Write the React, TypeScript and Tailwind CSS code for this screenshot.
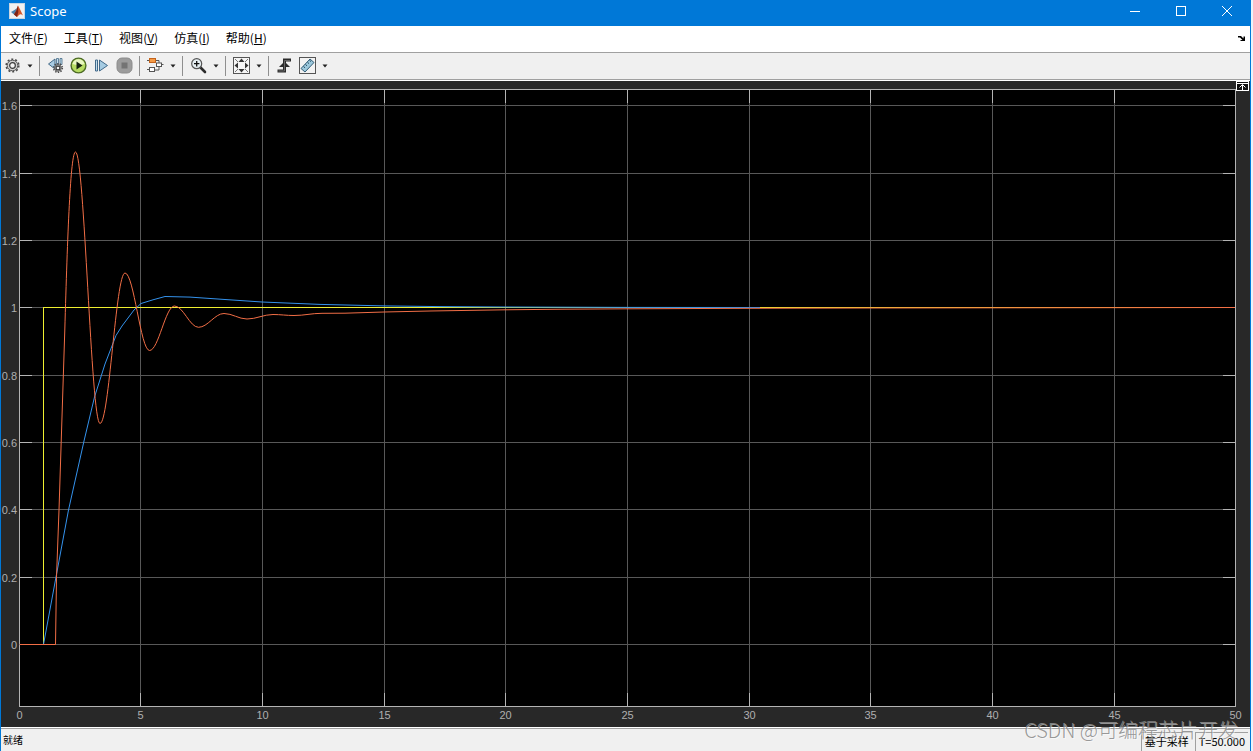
import { ReactNode } from "react";

const menus = [
  { label: "文件", key: "F" },
  { label: "工具", key: "T" },
  { label: "视图", key: "V" },
  { label: "仿真", key: "I" },
  { label: "帮助", key: "H" },
];

const xTicks = [0, 5, 10, 15, 20, 25, 30, 35, 40, 45, 50];
const yTicks = [0, 0.2, 0.4, 0.6, 0.8, 1, 1.2, 1.4, 1.6];

const LEFT = 19;
const RIGHT = 1235;
const TOP = 89;
const BOTTOM = 706;

// snapped to pixel centres so the grid stays sharp
const toX = (t: number) => Math.floor(19.2 + t * 24.33) + 0.5;
const toY = (v: number) => Math.floor(644.7 - v * 336.8) + 0.5;

// turning points of the oscillating response
const swings = [
  [75.5, 152],
  [100, 423.5],
  [125, 273],
  [149.5, 350.5],
  [174.5, 306],
  [198.5, 327.3],
  [224, 313.5],
  [247, 319],
  [273, 314.5],
  [294, 315.5],
  [322, 313.3],
];

function swingPath() {
  let d = "M19.5 644.5H55.5L56.5 577L59 510L61.2 442L64.8 330C67.5 235 70.5 152 75.5 152";
  for (let i = 1; i < swings.length; i++) {
    const [x0, y0] = swings[i - 1];
    const [x1, y1] = swings[i];
    const k = (x1 - x0) * 0.364;
    d += `C${x0 + k} ${y0} ${x1 - k} ${y1} ${x1} ${y1}`;
  }
  return d + "L345 313.2L384 312L430 311L505 309.8L565 309.2L627 308.8L750 308.3L870 308L1235 307.5";
}

function Chart() {
  return (
    <svg
      viewBox="1 81 1249 646"
      className="block w-full"
      fontFamily="'Liberation Sans', Arial, sans-serif"
      fontSize="11"
      role="img"
      aria-label="Scope"
    >
      <rect x={LEFT} y={TOP} width={RIGHT - LEFT} height={BOTTOM - TOP} fill="#000" />
      <g stroke="#585858" shapeRendering="crispEdges">
        {xTicks.slice(1, -1).map((t) => (
          <line key={t} x1={toX(t)} x2={toX(t)} y1={TOP} y2={BOTTOM} />
        ))}
        {yTicks.map((v) => (
          <line key={v} x1={LEFT} x2={RIGHT} y1={toY(v)} y2={toY(v)} />
        ))}
      </g>
      <g stroke="#b4b4b4" shapeRendering="crispEdges">
        {xTicks.slice(1, -1).map((t) => (
          <path key={t} d={`M${toX(t)} ${TOP}v14M${toX(t)} ${BOTTOM}v-13`} />
        ))}
        {yTicks.map((v) => (
          <path key={v} d={`M${LEFT} ${toY(v)}h13M${RIGHT} ${toY(v)}h-12`} />
        ))}
        <rect x="19.5" y="89.5" width="1216" height="617" fill="none" />
      </g>
      <g fill="none" strokeWidth="1" strokeLinejoin="round">
        <path d="M19.5 644.5H43.5V307.5H1235" stroke="#eeee30" shapeRendering="crispEdges" />
        <path
          d="M19.5 644.5H43.5L56 577L68.5 510L84 441L94.5 397L105 364L116 335.5L122 326L134 310L141 303.5L153 299.8L165 296.5L190 297.1L225 299.5L262 302L320 304.4L384 305.9L440 306.6L505 307L630 307.4L760 307.5"
          stroke="#3492ec"
        />
        <path d={swingPath()} stroke="#f26e46" />
      </g>
      <g fill="#afafaf">
        {yTicks.map((v) => (
          <text key={v} x="17" y={toY(v) + 4} textAnchor="end">
            {v}
          </text>
        ))}
        {xTicks.map((t) => (
          <text key={t} x={toX(t)} y="719" textAnchor="middle">
            {t}
          </text>
        ))}
      </g>
    </svg>
  );
}

function Tool({ label, children }: { label: string; children: ReactNode }) {
  return (
    <button aria-label={label} className="flex h-6 w-[23px] items-center justify-center">
      <svg width="17" height="17" viewBox="0 0 17 17" fill="none">
        {children}
      </svg>
    </button>
  );
}

function Caret({ label }: { label: string }) {
  return (
    <button aria-label={label} className="flex h-6 w-3 items-center justify-center">
      <svg width="6" height="4" viewBox="0 0 6 4">
        <path d="M.5 .5h5L3 3.5z" fill="#222" />
      </svg>
    </button>
  );
}

function Separator() {
  return <div className="ml-[3px] mr-1 h-5 w-px bg-[#8f8f8f]" />;
}

function Gear({ cx, cy, r }: { cx: number; cy: number; r: number }) {
  return (
    <>
      <circle cx={cx} cy={cy} r={r} stroke="#4a4a4a" strokeWidth="1.6" strokeDasharray={`${(r * Math.PI) / 10} ${(r * Math.PI) / 10}`} />
      <circle cx={cx} cy={cy} r={r - 1} fill="#d2d2d2" stroke="#555" strokeWidth="1" />
      <circle cx={cx} cy={cy} r={r * 0.45} fill="#f4f4f4" stroke="#3c3c3c" strokeWidth="1.2" />
    </>
  );
}

function Toolbar() {
  return (
    <div className="flex h-[27px] items-center border-b border-[#a0a0a0] bg-[#f0f0f0] pb-px">
      <Tool label="配置属性">
        <Gear cx={8.5} cy={8.5} r={6.3} />
      </Tool>
      <Caret label="配置选项" />
      <Separator />
      <Tool label="步退选项">
        <path d="M8 2L1.5 7L8 12z" fill="#a9cbe2" stroke="#446a87" />
        <path d="M9.5 1.5h2v6h-2zM13 1.5h2v6h-2z" fill="#c2dcec" stroke="#446a87" strokeWidth=".8" />
        <Gear cx={11} cy={11} r={4.3} />
      </Tool>
      <Tool label="运行">
        <circle cx="8.5" cy="8.5" r="7.4" fill="#b6dc63" stroke="#4d6b26" strokeWidth="1.4" />
        <path d="M2.5 7a6.2 6.2 0 0 1 12 0q-6 2-12 0z" fill="#e9f7c2" />
        <path d="M6.5 4.5l6 4l-6 4z" fill="#182510" />
      </Tool>
      <Tool label="步进">
        <path d="M2.5 3h2v11h-2z" fill="#c3deed" stroke="#41698a" />
        <path d="M6.5 3v11l8-5.5z" fill="#a5cbe2" stroke="#41698a" />
      </Tool>
      <Tool label="停止">
        <rect x="1" y="1" width="15" height="15" rx="5" fill="#9c9c9c" stroke="#8c8c8c" />
        <rect x="5.5" y="5.5" width="6" height="6" fill="#747474" />
      </Tool>
      <Separator />
      <Tool label="突出显示模块">
        <path d="M8 3.5h4v3M12 9v4H7M0 3.5h2M0 12.5h2" stroke="#555" />
        <rect x="2.5" y="1.5" width="6" height="4" fill="#f59a45" stroke="#c4631b" />
        <rect x="9.5" y="6" width="5" height="3.5" fill="#fff" stroke="#555" />
        <rect x="2.5" y="10.5" width="5" height="4" fill="#fff" stroke="#555" />
        <path d="M14.5 7.5h2" stroke="#555" />
      </Tool>
      <Caret label="模块选项" />
      <Separator />
      <Tool label="放大">
        <path d="M10.5 10.5l4.5 4.5" stroke="#2c2c2c" strokeWidth="2.6" strokeLinecap="round" />
        <circle cx="6.7" cy="6.7" r="5" fill="#e6eff3" stroke="#555" strokeWidth="1.2" />
        <path d="M4 6.7h5.4M6.7 4v5.4" stroke="#111" strokeWidth="1.3" />
      </Tool>
      <Caret label="缩放选项" />
      <Separator />
      <Tool label="缩放以适应">
        <rect x=".5" y=".5" width="16" height="16" fill="#f5f5f5" stroke="#555" />
        <path d="M8.5 1.5l3 3.5h-6zM8.5 15.5l3-3.5h-6zM1.5 8.5l3.5-3v6zM15.5 8.5l-3.500-3v6z" fill="#333" />
        <path d="M2 2l3 3M15 2l-3 3M2 15l3-3M15 15l-3-3" stroke="#777" />
      </Tool>
      <Caret label="适应选项" />
      <Separator />
      <Tool label="触发器">
        <path d="M1.500 14h7V3H15" stroke="#2b2b2b" strokeWidth="3" />
        <path d="M3 10L8.5 4.500l5.500 5.500z" fill="#2b2b2b" />
        <path d="M2.500 14h6V3.500H14" stroke="#777" strokeWidth=".8" />
      </Tool>
      <Tool label="光标测量">
        <rect x=".5" y=".5" width="16" height="16" fill="#f3f3f3" stroke="#555" />
        <path d="M2 11.500L11 2L15 5.500L6 15z" fill="#9cc8dc" stroke="#345f78" />
        <path d="M4.500 9.500l1.500 1.300M6.500 7.500l1.500 1.300M8.500 5.300l1.500 1.300M10.500 3.300l1.500 1.300" stroke="#234b62" />
      </Tool>
      <Caret label="测量选项" />
    </div>
  );
}

function TitleBar() {
  return (
    <header className="flex h-[26px] items-center justify-between bg-[#0078d7] text-white">
      <div className="flex items-center gap-[5px] pb-1 pl-2">
        <svg width="16" height="16" viewBox="0 0 16 16">
          <rect x=".5" y=".5" width="15" height="15" fill="#f1f1f1" stroke="#c9d6e2" />
          <path d="M2 9l3.500-2L8 5l-1.500 6L5 11.500z" fill="#4b82ae" />
          <path d="M5 11.500Q7.500 8 9 2.500Q11 6 14 12.500Q11.500 10.500 10 12L8 14z" fill="#d5582b" />
          <path d="M5 11.500Q7.500 8 9 2.500L9.300 9L8 14z" fill="#7d2317" />
        </svg>
        <h1 className="font-['Noto_Sans'] text-[13px] leading-4">Scope</h1>
      </div>
      <div className="flex pb-[5px]">
        <button aria-label="最小化" className="flex h-5 w-[46px] items-center justify-center">
          <svg width="10" height="10" viewBox="0 0 10 10" stroke="#fff">
            <path d="M0 5.500h10" />
          </svg>
        </button>
        <button aria-label="最大化" className="flex h-5 w-[46px] items-center justify-center">
          <svg width="10" height="10" viewBox="0 0 10 10" stroke="#fff" fill="none">
            <rect x=".5" y=".5" width="9" height="9" />
          </svg>
        </button>
        <button aria-label="关闭" className="flex h-5 w-[46px] items-center justify-center">
          <svg width="10" height="10" viewBox="0 0 10 10" stroke="#fff">
            <path d="M0 0l10 10M10 0L0 10" />
          </svg>
        </button>
      </div>
    </header>
  );
}

function MenuBar() {
  return (
    <nav className="flex h-[27px] items-center justify-between border-b border-[#a0a0a0] bg-white pb-0.5 pl-2 pr-1 text-[12px] leading-4 text-black">
      <div className="flex gap-4">
        {menus.map((m) => (
          <button key={m.key}>
            {m.label}(<span className="underline">{m.key}</span>)
          </button>
        ))}
      </div>
      <button aria-label="停靠">
        <svg width="8" height="7" viewBox="0 0 8 7">
          <path d="M0 1h3l2.500 2.500V1.500H7V6H2.500V5h2L2 2.500H0z" fill="#000" />
        </svg>
      </button>
    </nav>
  );
}

export default function App() {
  return (
    <div className="flex min-h-screen bg-[#e9f4fb] pr-[2px] font-['Noto_Sans_CJK_SC',sans-serif]">
      <div className="flex flex-1 flex-col border-x border-[#0078d7] bg-[#f0f0f0]">
        <TitleBar />
        <MenuBar />
        <Toolbar />
        <main className="relative border-y border-white bg-[#282828]">
          <Chart />
          <button aria-label="最大化坐标区" className="absolute right-px top-0">
            <svg width="13" height="10" viewBox="0 0 13 10" fill="none" stroke="#fff">
              <rect x=".5" y=".5" width="12" height="9" fill="#111" />
              <path d="M1 2.500h11M6.500 9V4M3.500 6.500l3-3l3 3" />
            </svg>
          </button>
        </main>
        <footer className="relative flex flex-1 items-end justify-between border-t border-[#a0a0a0] text-[11px] leading-4 text-black">
          <span className="pb-[3px] pl-[2px] text-[10px]">就绪</span>
          <div className="flex gap-[3px] pr-[2px]">
            <span className="border-l border-t border-[#a0a0a0] px-[3px] pb-[2px]">基于采样</span>
            <span className="border-l border-t border-[#a0a0a0] px-[3px] pb-[2px]">T=50.000</span>
          </div>
          <span className="pointer-events-none absolute -top-[11px] right-3 text-[20px] leading-6 font-light whitespace-nowrap text-[#8c8c8c]/90 [text-shadow:1px_1px_0_#ffffff80]">
            CSDN @可编程芯片开发
          </span>
        </footer>
      </div>
    </div>
  );
}
